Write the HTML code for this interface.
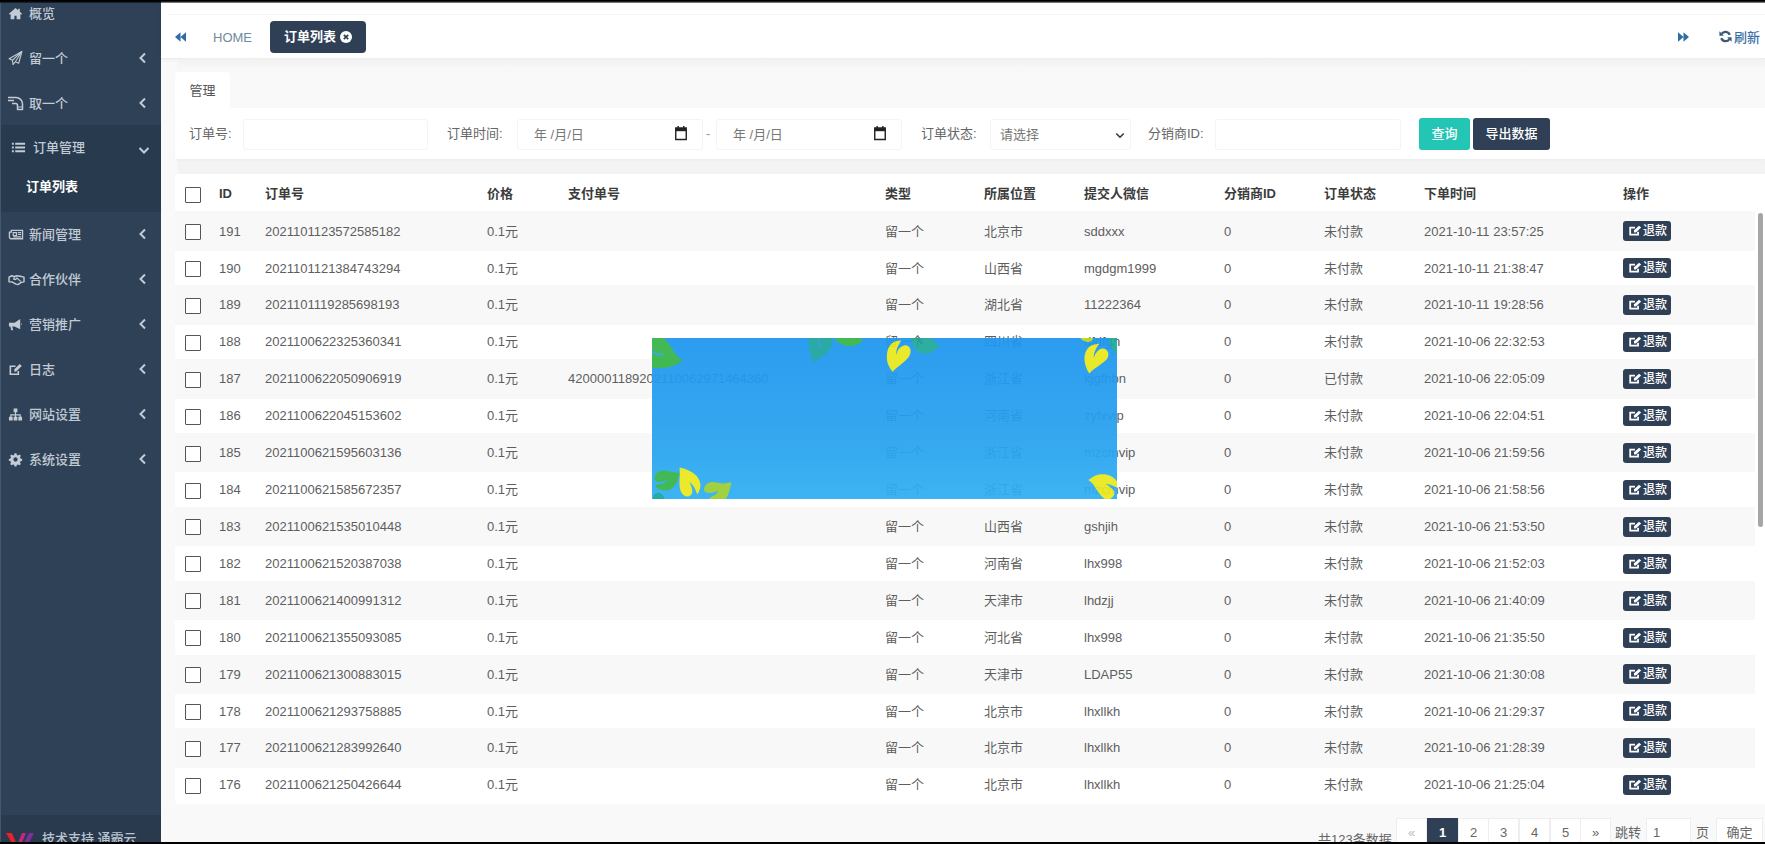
<!DOCTYPE html>
<html lang="zh-CN">
<head>
<meta charset="utf-8">
<title>订单列表</title>
<style>
*{box-sizing:border-box;margin:0;padding:0}
html,body{width:1765px;height:844px;overflow:hidden}
body{position:relative;background:#f9f9f9;font-family:"Liberation Sans","Noto Sans CJK SC",sans-serif;font-size:13px;color:#555;}
.topline{position:absolute;left:0;top:0;width:1765px;height:2.5px;background:linear-gradient(#000 0,#000 40%,rgba(0,0,0,.35) 100%);z-index:50}
.botline{position:absolute;left:0;top:841.5px;width:1765px;height:3px;background:#000;z-index:50}
/* sidebar */
.side{position:absolute;left:0;top:0;width:161px;height:844px;background:#2f4157;color:#c2cbd5;font-size:13px;font-weight:500}
.side .edge{position:absolute;left:0;top:0;width:1px;height:844px;background:#44566c;z-index:3}
.nav li{list-style:none;position:absolute;left:0;width:161px;height:45px;line-height:45px}
.nav li .ic{position:absolute;left:8px;top:15px;width:16px;height:15px;line-height:0}
.nav li .ic svg{display:block}
.nav li .tx{position:absolute;left:29px;top:0;white-space:nowrap}
.nav li .ar{position:absolute;left:138px;top:16px;width:9px;height:12px}
.nav .open{background:#283a4e}
.nav .sub{color:#fff;font-weight:bold}
.side .foot{position:absolute;left:0;top:815px;width:161px;height:29px;background:#293a4e}
.side .foot span{position:absolute;left:42px;top:15px;line-height:18px;font-size:13px;color:#b9c4d0;white-space:nowrap}
/* topbar */
.top{position:absolute;left:161px;top:2px;width:1604px;height:56.5px;background:#fff;border-bottom:1px solid #ececec;box-shadow:0 1px 4px rgba(0,0,0,.05)}
.top .hl{position:absolute;left:8px;top:12px;width:1596px;height:1px;background:#f4f4f4}
.tabact{position:absolute;left:109px;top:19px;width:96px;height:32px;border-radius:4px;background:#2f4056;color:#fff;font-weight:bold;line-height:32px}
.tabact span{position:absolute;left:14px;top:0;white-space:nowrap}
.home{position:absolute;left:52px;top:20px;line-height:32px;color:#7189a0;font-size:13px}
.refresh{position:absolute;left:1573px;top:20px;line-height:32px;color:#3b6fa5;white-space:nowrap;font-weight:500}
/* panels */
.gap{position:absolute;left:178px;width:1587px;background:#f3f3f3;box-shadow:0 0 3px #f3f3f3}
.tab{position:absolute;left:175px;top:72px;width:55px;height:37px;background:#fff;border-radius:4px 4px 0 0;line-height:38px;text-align:center;color:#555}
.search{position:absolute;left:175px;top:107.5px;width:1590px;height:51.5px;background:#fff;box-shadow:0 1px 3px rgba(0,0,0,.03)}
.search .lb{position:absolute;top:0;line-height:52px;white-space:nowrap;color:#666}
.search .inp{position:absolute;top:11px;height:31px;background:#fff;border:1px solid #f4f4f4;border-radius:3px;color:#777;line-height:29px}
.btn{position:absolute;top:10px;height:32px;border-radius:3px;color:#fff;line-height:32px;text-align:center;font-weight:500}
.tbl{position:absolute;left:175px;top:174px;width:1590px;height:629.5px;border-radius:4px 0 0 4px;background:#fff}
table{border-collapse:collapse;table-layout:fixed;position:absolute;left:0;top:0;width:1580px}
th,td{line-height:20px;text-align:left;font-weight:normal;padding:0;white-space:nowrap;overflow:visible;vertical-align:middle}
thead tr{height:38.635px}
th{padding-top:1px}
th{font-weight:bold;color:#3c3c3c}
tbody tr{height:36.93px}
.band{position:absolute;left:0;width:1580px;height:39.4px;background:#f8f8f8}
td{color:#5e5e5e;padding-top:1px}
.cb{display:block;width:16px;height:16px;border:1px solid #555;border-radius:1px;background:#fff;margin-left:9.5px;position:relative;top:.5px}
th .cb{top:1px}
.rf{display:inline-block;width:48px;height:20px;border-radius:3px;background:#2f4056;color:#fff;font-size:12px;font-weight:500;line-height:20px;position:relative;top:-.5px;vertical-align:middle}
.rf svg{position:absolute;left:5px;top:3px}
.rf span{position:absolute;left:20px;top:0}
.scroll{position:absolute;left:1757.5px;top:213px;width:5px;height:314px;background:#a6a6a6;border-radius:2.5px}
/* overlay */
.ov{position:absolute;left:652px;top:338px;width:465px;height:161px;overflow:hidden;opacity:.935;background:linear-gradient(#1e96ef,#26a0ef 55%,#30aff2);z-index:20}
/* pager */
.pgt{position:absolute;top:817.5px;line-height:30px;color:#666;white-space:nowrap}
.pg{position:absolute;top:817.5px;height:30px;width:31px;border:1px solid #eee;background:#fff;text-align:center;line-height:28px;color:#666}
</style>
</head>
<body>
<div class="side">
  <div class="edge"></div>
  <ul class="nav"><li style="top:-9px"><span class="ic"><svg viewBox="0 0 16 16" width="15" height="15"><path d="M8 2.2 1 8.2l.9 1 .9-.8V14h4v-3.6h2.4V14h4V8.4l.9.8.9-1L12.6 6V2.8h-1.8v1.7z" fill="#c3ccd6"/></svg></span><span class="tx">概览</span></li><li style="top:36px"><span class="ic"><svg viewBox="0 0 16 16" width="15" height="16" style="margin-top:-1px"><path d="M14.800 1 1.200 8.800l3.600 1.600.6 4.600 2.400-3 3.600 1.600z" fill="none" stroke="#c3ccd6" stroke-width="1.200" stroke-linejoin="round"/><path d="M14.800 1 4.800 10.400M14.800 1 7.800 12" fill="none" stroke="#c3ccd6" stroke-width="1.100"/></svg></span><span class="tx">留一个</span><svg class="ar" viewBox="0 0 9 12"><path d="M7 1.500 2.500 6 7 10.500" fill="none" stroke="#c3ccd6" stroke-width="2"/></svg></li><li style="top:81px"><span class="ic"><svg viewBox="0 0 18 16" width="18" height="16" style="margin-left:-1px;margin-top:-1px"><path d="M1 2.500h8c3.500 0 6.500 2.800 6.500 6.500v5.500H10.500V10.500c0-1-.8-2-2-2H5M1 5.500h6" fill="none" stroke="#c3ccd6" stroke-width="1.500" stroke-linejoin="round"/><path d="M10.500 12h5" stroke="#c3ccd6" stroke-width="1"/></svg></span><span class="tx">取一个</span><svg class="ar" viewBox="0 0 9 12"><path d="M7 1.500 2.500 6 7 10.500" fill="none" stroke="#c3ccd6" stroke-width="2"/></svg></li><li class="open" style="top:125px;height:87px"><span class="ic" style="left:11px"><svg viewBox="0 0 16 16" width="15" height="15"><path d="M1 3h2v2H1zM4.500 3H15v2H4.500zM1 7h2v2H1zM4.500 7H15v2H4.500zM1 11h2v2H1zM4.500 11H15v2H4.500z" fill="#c3ccd6"/></svg></span><span class="tx" style="left:33px">订单管理</span><svg class="ar" viewBox="0 0 12 9" style="width:12px;height:9px;top:21px"><path d="M1.500 2 6 6.500 10.500 2" fill="none" stroke="#c3ccd6" stroke-width="2"/></svg><span class="tx sub" style="left:26px;top:39px">订单列表</span></li><li style="top:212px"><span class="ic"><svg viewBox="0 0 16 16" width="16" height="15"><path d="M3 3.500h12v9H2.500A1.500 1.500 0 0 1 1 11V5.500h2z" fill="none" stroke="#c3ccd6" stroke-width="1.400"/><path d="M5 6h3.500v3H5zM10 6h3.500M10 8h3.500M5 10.500h8.500" fill="none" stroke="#c3ccd6" stroke-width="1.200"/></svg></span><span class="tx">新闻管理</span><svg class="ar" viewBox="0 0 9 12"><path d="M7 1.500 2.500 6 7 10.500" fill="none" stroke="#c3ccd6" stroke-width="2"/></svg></li><li style="top:257px"><span class="ic"><svg viewBox="0 0 18 16" width="17" height="15"><path d="M1 5.500 4 4l3 1 2-1 4 .5 4 1v5l-3 .5-3.500 2.500-2-.5L4 10.500H1z" fill="none" stroke="#c3ccd6" stroke-width="1.500" stroke-linejoin="round"/><path d="M7 5 6 7.500l2 .5 1.500-1.500 4 3.500" fill="none" stroke="#c3ccd6" stroke-width="1.300"/></svg></span><span class="tx">合作伙伴</span><svg class="ar" viewBox="0 0 9 12"><path d="M7 1.500 2.500 6 7 10.500" fill="none" stroke="#c3ccd6" stroke-width="2"/></svg></li><li style="top:302px"><span class="ic"><svg viewBox="0 0 16 16" width="15" height="15"><path d="M13 2v11L7 10H4.500l1 4H3.500l-1-4H1V6h6zM14 6.200c.8.300.8 2.300 0 2.600z" fill="#c3ccd6"/></svg></span><span class="tx">营销推广</span><svg class="ar" viewBox="0 0 9 12"><path d="M7 1.500 2.500 6 7 10.500" fill="none" stroke="#c3ccd6" stroke-width="2"/></svg></li><li style="top:347px"><span class="ic"><svg viewBox="0 0 16 16" width="15" height="15"><path d="M11 9.500V13H2.500V4.500H8" fill="none" stroke="#c3ccd6" stroke-width="1.700"/><path d="M7 10.500 6.500 8l6-6 2.200 2.200-6 6z" fill="#c3ccd6"/></svg></span><span class="tx">日志</span><svg class="ar" viewBox="0 0 9 12"><path d="M7 1.500 2.500 6 7 10.500" fill="none" stroke="#c3ccd6" stroke-width="2"/></svg></li><li style="top:392px"><span class="ic"><svg viewBox="0 0 16 16" width="15" height="15"><path d="M6 1.500h4v4H6zM1 10.500h4v4H1zM6 10.500h4v4H6zM11 10.500h4v4h-4zM7.400 5.500h1.200v2.300h5v2.700h-1.200V9H8.600v1.500H7.400V9H3.600v1.500H2.400V7.800h5z" fill="#c3ccd6"/></svg></span><span class="tx">网站设置</span><svg class="ar" viewBox="0 0 9 12"><path d="M7 1.500 2.500 6 7 10.500" fill="none" stroke="#c3ccd6" stroke-width="2"/></svg></li><li style="top:437px"><span class="ic"><svg viewBox="0 0 16 16" width="15" height="15"><path d="M8 1.200l1 .1.500 1.800 1.200.5 1.600-.9 1.400 1.400-.9 1.600.5 1.200 1.800.5v2l-1.800.5-.5 1.200.9 1.600-1.400 1.400-1.600-.9-1.200.5-.5 1.800H7l-.5-1.800-1.200-.5-1.600.9-1.400-1.400.9-1.600-.5-1.200L.9 9.400v-2l1.800-.5.5-1.200-.9-1.600 1.400-1.400 1.600.9 1.200-.5.500-1.800zM8 5.700a2.300 2.300 0 1 0 0 4.600 2.300 2.300 0 0 0 0-4.600z" fill="#c3ccd6" fill-rule="evenodd"/></svg></span><span class="tx">系统设置</span><svg class="ar" viewBox="0 0 9 12"><path d="M7 1.500 2.500 6 7 10.500" fill="none" stroke="#c3ccd6" stroke-width="2"/></svg></li></ul>
  <div class="foot"><svg viewBox="0 0 30 14" width="30" height="14" style="position:absolute;left:6px;top:18px"><path d="M0 0h6l5 12h-4z" fill="#e8212b"/><path d="M11 12 16 0h4l-5 12z" fill="#c0287a"/><path d="M17 12 23 0h5l-6 12z" fill="#7a2f9a"/></svg><span>技术支持 通霸云</span></div>
</div>
<div class="top">
  <div class="hl"></div><svg viewBox="0 0 14 12" width="11" height="10" style="position:absolute;left:14px;top:30px"><path d="M7 0v12L0 6zM14 0v12L7 6z" fill="#2e6da4"/></svg><svg viewBox="0 0 14 12" width="11" height="10" style="position:absolute;left:1517px;top:30px"><path d="M0 0v12l7-6zM7 0v12l7-6z" fill="#2e6da4"/></svg>
  <div class="home">HOME</div>
  <div class="tabact"><span>订单列表</span><svg viewBox="0 0 12 12" width="12" height="12" style="position:absolute;left:70px;top:10px"><circle cx="6" cy="6" r="6" fill="#fff"/><path d="M3.800 3.800l4.400 4.400M8.200 3.800 3.800 8.200" stroke="#2f4056" stroke-width="1.700"/></svg></div>
  <div class="refresh"><svg viewBox="0 0 16 16" width="13" height="13" style="position:absolute;left:-15.500px;top:8.300px"><path d="M13.200 6A5.600 5.600 0 0 0 3.200 4.800M2.800 10A5.600 5.600 0 0 0 12.800 11.200" fill="none" stroke="#3c5a78" stroke-width="2.800"/><path d="M.5 1.500v5.500h5.500zM15.500 14.500V9h-5.500z" fill="#3c5a78"/></svg>刷新</div>
</div>
<div class="gap" style="top:159px;height:15px"></div>
<div class="gap" style="top:58.5px;height:12px;background:linear-gradient(#f1f1f1,#f9f9f9)"></div>
<div class="tab">管理</div>
<div class="search">
<span class="lb" style="left:14px">订单号:</span>
<span class="inp" style="left:68px;width:185px"></span>
<span class="lb" style="left:272px">订单时间:</span>
<span class="inp" style="left:342px;width:186px"><span style="position:absolute;left:16px;top:0">年 /月/日</span><svg viewBox="0 0 16 16" width="14" height="16" preserveAspectRatio="none" style="position:absolute;right:14px;top:5.500px"><path d="M2 3h12v11.500H2z" fill="none" stroke="#222" stroke-width="1.600"/><path d="M2 3h12v3.200H2z" fill="#222"/><path d="M4.800 1v2.500M11.200 1v2.500" stroke="#222" stroke-width="1.600"/></svg></span>
<span class="lb" style="left:531px;color:#999">-</span>
<span class="inp" style="left:541px;width:186px"><span style="position:absolute;left:16px;top:0">年 /月/日</span><svg viewBox="0 0 16 16" width="14" height="16" preserveAspectRatio="none" style="position:absolute;right:14px;top:5.500px"><path d="M2 3h12v11.500H2z" fill="none" stroke="#222" stroke-width="1.600"/><path d="M2 3h12v3.200H2z" fill="#222"/><path d="M4.800 1v2.500M11.200 1v2.500" stroke="#222" stroke-width="1.600"/></svg></span>
<span class="lb" style="left:746px">订单状态:</span>
<span class="inp" style="left:815px;width:141px"><span style="position:absolute;left:9px;top:0">请选择</span><svg viewBox="0 0 12 8" width="10" height="7" style="position:absolute;right:5px;top:12px"><path d="M1.500 1.500 6 6l4.500-4.500" fill="none" stroke="#333" stroke-width="1.800"/></svg></span>
<span class="lb" style="left:973px">分销商ID:</span>
<span class="inp" style="left:1040px;width:186px"></span>
<span class="btn" style="left:1244px;width:51px;background:#23c6b4">查询</span>
<span class="btn" style="left:1298px;width:77px;background:#2f4056">导出数据</span>
</div>
<div class="tbl"><div class="band" style="top:37.40px"></div><div class="band" style="top:111.26px"></div><div class="band" style="top:185.12px"></div><div class="band" style="top:258.98px"></div><div class="band" style="top:332.84px"></div><div class="band" style="top:406.70px"></div><div class="band" style="top:480.56px"></div><div class="band" style="top:554.42px"></div><table><colgroup><col style="width:44px"><col style="width:46px"><col style="width:222px"><col style="width:81px"><col style="width:317px"><col style="width:99px"><col style="width:100px"><col style="width:140px"><col style="width:100px"><col style="width:100px"><col style="width:199px"><col style="width:132px"></colgroup><thead><tr><th><span class="cb"></span></th><th>ID</th><th>订单号</th><th>价格</th><th>支付单号</th><th>类型</th><th>所属位置</th><th>提交人微信</th><th>分销商ID</th><th>订单状态</th><th>下单时间</th><th>操作</th></tr></thead><tbody>
<tr><td><span class="cb"></span></td><td>191</td><td>2021101123572585182</td><td>0.1元</td><td></td><td>留一个</td><td>北京市</td><td>sddxxx</td><td>0</td><td>未付款</td><td>2021-10-11 23:57:25</td><td><span class="rf"><svg viewBox="0 0 16 16" width="14" height="13" preserveAspectRatio="none"><path d="M11.500 9.500V13H2.500V4.500H8" fill="none" stroke="#fff" stroke-width="2"/><path d="M7 10.500 6.600 8l6-6 2.400 2.400-6 6z" fill="#fff"/></svg><span>退款</span></span></td></tr>
<tr><td><span class="cb"></span></td><td>190</td><td>2021101121384743294</td><td>0.1元</td><td></td><td>留一个</td><td>山西省</td><td>mgdgm1999</td><td>0</td><td>未付款</td><td>2021-10-11 21:38:47</td><td><span class="rf"><svg viewBox="0 0 16 16" width="14" height="13" preserveAspectRatio="none"><path d="M11.500 9.500V13H2.500V4.500H8" fill="none" stroke="#fff" stroke-width="2"/><path d="M7 10.500 6.600 8l6-6 2.400 2.400-6 6z" fill="#fff"/></svg><span>退款</span></span></td></tr>
<tr><td><span class="cb"></span></td><td>189</td><td>2021101119285698193</td><td>0.1元</td><td></td><td>留一个</td><td>湖北省</td><td>11222364</td><td>0</td><td>未付款</td><td>2021-10-11 19:28:56</td><td><span class="rf"><svg viewBox="0 0 16 16" width="14" height="13" preserveAspectRatio="none"><path d="M11.500 9.500V13H2.500V4.500H8" fill="none" stroke="#fff" stroke-width="2"/><path d="M7 10.500 6.600 8l6-6 2.400 2.400-6 6z" fill="#fff"/></svg><span>退款</span></span></td></tr>
<tr><td><span class="cb"></span></td><td>188</td><td>2021100622325360341</td><td>0.1元</td><td></td><td>留一个</td><td>四川省</td><td>dfdfgn</td><td>0</td><td>未付款</td><td>2021-10-06 22:32:53</td><td><span class="rf"><svg viewBox="0 0 16 16" width="14" height="13" preserveAspectRatio="none"><path d="M11.500 9.500V13H2.500V4.500H8" fill="none" stroke="#fff" stroke-width="2"/><path d="M7 10.500 6.600 8l6-6 2.400 2.400-6 6z" fill="#fff"/></svg><span>退款</span></span></td></tr>
<tr><td><span class="cb"></span></td><td>187</td><td>2021100622050906919</td><td>0.1元</td><td>4200001189202110062971464360</td><td>留一个</td><td>浙江省</td><td>kjgfhbn</td><td>0</td><td>已付款</td><td>2021-10-06 22:05:09</td><td><span class="rf"><svg viewBox="0 0 16 16" width="14" height="13" preserveAspectRatio="none"><path d="M11.500 9.500V13H2.500V4.500H8" fill="none" stroke="#fff" stroke-width="2"/><path d="M7 10.500 6.600 8l6-6 2.400 2.400-6 6z" fill="#fff"/></svg><span>退款</span></span></td></tr>
<tr><td><span class="cb"></span></td><td>186</td><td>2021100622045153602</td><td>0.1元</td><td></td><td>留一个</td><td>河南省</td><td>zyfxvip</td><td>0</td><td>未付款</td><td>2021-10-06 22:04:51</td><td><span class="rf"><svg viewBox="0 0 16 16" width="14" height="13" preserveAspectRatio="none"><path d="M11.500 9.500V13H2.500V4.500H8" fill="none" stroke="#fff" stroke-width="2"/><path d="M7 10.500 6.600 8l6-6 2.400 2.400-6 6z" fill="#fff"/></svg><span>退款</span></span></td></tr>
<tr><td><span class="cb"></span></td><td>185</td><td>2021100621595603136</td><td>0.1元</td><td></td><td>留一个</td><td>浙江省</td><td>mzcmvip</td><td>0</td><td>未付款</td><td>2021-10-06 21:59:56</td><td><span class="rf"><svg viewBox="0 0 16 16" width="14" height="13" preserveAspectRatio="none"><path d="M11.500 9.500V13H2.500V4.500H8" fill="none" stroke="#fff" stroke-width="2"/><path d="M7 10.500 6.600 8l6-6 2.400 2.400-6 6z" fill="#fff"/></svg><span>退款</span></span></td></tr>
<tr><td><span class="cb"></span></td><td>184</td><td>2021100621585672357</td><td>0.1元</td><td></td><td>留一个</td><td>浙江省</td><td>mzcmvip</td><td>0</td><td>未付款</td><td>2021-10-06 21:58:56</td><td><span class="rf"><svg viewBox="0 0 16 16" width="14" height="13" preserveAspectRatio="none"><path d="M11.500 9.500V13H2.500V4.500H8" fill="none" stroke="#fff" stroke-width="2"/><path d="M7 10.500 6.600 8l6-6 2.400 2.400-6 6z" fill="#fff"/></svg><span>退款</span></span></td></tr>
<tr><td><span class="cb"></span></td><td>183</td><td>2021100621535010448</td><td>0.1元</td><td></td><td>留一个</td><td>山西省</td><td>gshjih</td><td>0</td><td>未付款</td><td>2021-10-06 21:53:50</td><td><span class="rf"><svg viewBox="0 0 16 16" width="14" height="13" preserveAspectRatio="none"><path d="M11.500 9.500V13H2.500V4.500H8" fill="none" stroke="#fff" stroke-width="2"/><path d="M7 10.500 6.600 8l6-6 2.400 2.400-6 6z" fill="#fff"/></svg><span>退款</span></span></td></tr>
<tr><td><span class="cb"></span></td><td>182</td><td>2021100621520387038</td><td>0.1元</td><td></td><td>留一个</td><td>河南省</td><td>lhx998</td><td>0</td><td>未付款</td><td>2021-10-06 21:52:03</td><td><span class="rf"><svg viewBox="0 0 16 16" width="14" height="13" preserveAspectRatio="none"><path d="M11.500 9.500V13H2.500V4.500H8" fill="none" stroke="#fff" stroke-width="2"/><path d="M7 10.500 6.600 8l6-6 2.400 2.400-6 6z" fill="#fff"/></svg><span>退款</span></span></td></tr>
<tr><td><span class="cb"></span></td><td>181</td><td>2021100621400991312</td><td>0.1元</td><td></td><td>留一个</td><td>天津市</td><td>lhdzjj</td><td>0</td><td>未付款</td><td>2021-10-06 21:40:09</td><td><span class="rf"><svg viewBox="0 0 16 16" width="14" height="13" preserveAspectRatio="none"><path d="M11.500 9.500V13H2.500V4.500H8" fill="none" stroke="#fff" stroke-width="2"/><path d="M7 10.500 6.600 8l6-6 2.400 2.400-6 6z" fill="#fff"/></svg><span>退款</span></span></td></tr>
<tr><td><span class="cb"></span></td><td>180</td><td>2021100621355093085</td><td>0.1元</td><td></td><td>留一个</td><td>河北省</td><td>lhx998</td><td>0</td><td>未付款</td><td>2021-10-06 21:35:50</td><td><span class="rf"><svg viewBox="0 0 16 16" width="14" height="13" preserveAspectRatio="none"><path d="M11.500 9.500V13H2.500V4.500H8" fill="none" stroke="#fff" stroke-width="2"/><path d="M7 10.500 6.600 8l6-6 2.400 2.400-6 6z" fill="#fff"/></svg><span>退款</span></span></td></tr>
<tr><td><span class="cb"></span></td><td>179</td><td>2021100621300883015</td><td>0.1元</td><td></td><td>留一个</td><td>天津市</td><td>LDAP55</td><td>0</td><td>未付款</td><td>2021-10-06 21:30:08</td><td><span class="rf"><svg viewBox="0 0 16 16" width="14" height="13" preserveAspectRatio="none"><path d="M11.500 9.500V13H2.500V4.500H8" fill="none" stroke="#fff" stroke-width="2"/><path d="M7 10.500 6.600 8l6-6 2.400 2.400-6 6z" fill="#fff"/></svg><span>退款</span></span></td></tr>
<tr><td><span class="cb"></span></td><td>178</td><td>2021100621293758885</td><td>0.1元</td><td></td><td>留一个</td><td>北京市</td><td>lhxllkh</td><td>0</td><td>未付款</td><td>2021-10-06 21:29:37</td><td><span class="rf"><svg viewBox="0 0 16 16" width="14" height="13" preserveAspectRatio="none"><path d="M11.500 9.500V13H2.500V4.500H8" fill="none" stroke="#fff" stroke-width="2"/><path d="M7 10.500 6.600 8l6-6 2.400 2.400-6 6z" fill="#fff"/></svg><span>退款</span></span></td></tr>
<tr><td><span class="cb"></span></td><td>177</td><td>2021100621283992640</td><td>0.1元</td><td></td><td>留一个</td><td>北京市</td><td>lhxllkh</td><td>0</td><td>未付款</td><td>2021-10-06 21:28:39</td><td><span class="rf"><svg viewBox="0 0 16 16" width="14" height="13" preserveAspectRatio="none"><path d="M11.500 9.500V13H2.500V4.500H8" fill="none" stroke="#fff" stroke-width="2"/><path d="M7 10.500 6.600 8l6-6 2.400 2.400-6 6z" fill="#fff"/></svg><span>退款</span></span></td></tr>
<tr><td><span class="cb"></span></td><td>176</td><td>2021100621250426644</td><td>0.1元</td><td></td><td>留一个</td><td>北京市</td><td>lhxllkh</td><td>0</td><td>未付款</td><td>2021-10-06 21:25:04</td><td><span class="rf"><svg viewBox="0 0 16 16" width="14" height="13" preserveAspectRatio="none"><path d="M11.500 9.500V13H2.500V4.500H8" fill="none" stroke="#fff" stroke-width="2"/><path d="M7 10.500 6.600 8l6-6 2.400 2.400-6 6z" fill="#fff"/></svg><span>退款</span></span></td></tr>
</tbody></table></div>
<div class="pgt" style="left:1318px;top:824.5px">共123条数据</div>
<div class="pg" style="left:1396px;color:#bbb">«</div>
<div class="pg" style="left:1427px;background:#2f4056;border-color:#2f4056;color:#fff;font-weight:bold">1</div>
<div class="pg" style="left:1458px">2</div>
<div class="pg" style="left:1488px">3</div>
<div class="pg" style="left:1519px">4</div>
<div class="pg" style="left:1550px">5</div>
<div class="pg" style="left:1580px">»</div>
<div class="pgt" style="left:1615px">跳转</div>
<div class="pg" style="left:1646px;width:45px;text-align:left;padding-left:6px">1</div>
<div class="pgt" style="left:1696px">页</div>
<div class="pg" style="left:1716px;width:47px">确定</div>

<div class="scroll"></div>
<div class="ov"><svg width="465" height="161" viewBox="0 0 465 161" style="position:absolute;left:0;top:0"><path d="M0 0H12.2C17 5 20 11 23.500 16 26 19.500 29 21.500 31.400 22.600 27 25.500 22 28 16.500 29.300 11 30.500 5 30.300 0 29.700z" fill="#35b548"/><path d="M-1 12.800C3 15.500 7 16.800 10 16.600" fill="none" stroke="#35a0ee" stroke-width="2" stroke-linecap="round"/><path d="M156.600 0C156.200 4 156.500 8 157.400 12 158.400 16.500 160 21 162 24.600 163.500 22.500 166 21 168.900 19.200 172.500 17 175.500 14.500 177.800 11.500 180 8.500 181.800 4.500 180.500 0z" fill="#1aa5a0"/><path d="M167.500 -1C166.600 3 166.800 6.500 167.800 10" fill="none" stroke="#2b9bd2" stroke-width="1.6" stroke-linecap="round"/><path d="M182.500 0C184.500 3 186.500 4.800 189.500 6.200 193 8 197 8.600 201 7.800 205 7 208.500 5 211 2.400 210 1.400 209 .6 207.800 0z" fill="#35b548"/><path d="M240.500 33.700C237.500 29.500 235.200 25.500 235 21.900 234.700 18.500 234.800 15.500 235.500 12.900 236.200 10 237.300 8 238.700 6.500 240.300 4.800 242 3.800 244.100 3.300 245.800 2.800 247.500 2.500 249.400 2.400 248 4.500 246.500 6.500 245.500 9.200 244.500 12 244 14.500 244.300 16.800 245 14 245.800 12.400 246.800 11 248.300 9 250 7.700 252.300 7.400 254 7.100 255.800 7.700 256.800 8.800 258.200 10.200 258.800 12 258.600 13.800 258.400 16 257.500 18 255.900 20.100 253.500 23 251 25 247.700 27.400 245 29.400 242.500 31.500 240.500 33.700z" fill="#e9e81d"/><path d="M259 0C259.400 3 260.200 5.500 261.300 7.400 262.500 9.800 264 11.800 265.900 13.300 268 15 271 15.800 274 15.600 276.500 15.400 279 14.500 281.300 12.900 283.500 11.500 285.800 10 287.600 8.800 285.800 6.800 284 4.800 282.200 2.900 281.300 1.900 280.400 .9 279.500 0z" fill="#1fa99b"/><path d="M265 -1C266.500 2 268 4 270.200 5.800" fill="none" stroke="#188f86" stroke-width="1.2" stroke-linecap="round"/><path d="M428.300 0C430.500 2.500 433 4 436.400 4.100 439 4.100 440.500 2.500 441.400 0z" fill="#b4d823"/><path d="M437.200 35.400C434.500 31 432.800 26.500 432.500 21.900 432.300 18.500 432.800 15.800 434 13.300 435 11 436.500 9.300 438.600 8 441 6.700 444 6.100 447.400 5.800 446 7.800 444.300 9.800 443.200 12.400 442 15 441.600 17.500 441.900 19.900 442.500 17.500 443.200 16 444.300 14.800 445.800 12.800 447.500 11 450 10.500 452 10.100 453.800 10.900 455 12.600 456 13.800 456.500 15.300 456.400 16.900 456.200 19 455.200 20.900 453.500 22.600 451 25 448 27 445 29 442 31 439.500 33 437.200 35.400z" fill="#e9e81d"/><path d="M457 0C456.900 2.500 457.200 4.500 457.800 6.200 458.800 8.800 460.200 10.800 462 12.600 463 13.800 464 15 465 16.200V0z" fill="#1fa99b"/><path d="M460.500 2C462 5 463.500 7 465 8.500" fill="none" stroke="#27b5a0" stroke-width="1.2" stroke-linecap="round"/><path d="M27.800 135.100C25 134.800 22.500 134.400 20 134 16.500 133.300 13.500 132.500 10.800 132.600 8.200 132.700 5.900 133.800 4.400 135.500 3.200 137 2.500 138.600 2.600 140.400 2.700 141.700 3.400 142.700 4.400 143.300 6.500 144.200 9 144 11.500 143.300 13.300 142.800 14.800 142.200 16.100 141.500 15.600 142.500 15 143.300 14.300 144 12 145.600 9.500 145.800 7.200 146.100 5.500 146.400 4.200 146.800 3.700 147.500 3.500 149 4.800 150 6.500 150.700 9 151.800 11.800 152.700 14.300 152.500 17 152.300 19.500 151 21.400 149 23.400 147 24.700 144.500 25.700 141.900 26.500 139.800 27.200 137.500 27.800 135.100z" fill="#35b548"/><path d="M27.500 129.400C30.500 130 33 130.800 35.600 131.900 39 133.400 42 135.200 44.200 137.600 46.200 139.800 47.500 142.200 48.100 144.700 48.700 147.200 48.500 149.500 47.700 151.800 47.100 153.500 46.300 155 45.200 156.400 45 155.700 44.800 155.200 44.500 154.600 43.800 152.600 43 150.700 42 149 40.800 147 39.200 145.300 37.100 144 38.200 145.400 38.800 146.800 39.200 148.200 39.900 150.200 40.500 152 40.300 153.900 40.100 155.800 38.900 157.400 37.100 158.200 35.300 159 33.500 158.600 32.100 157.500 30.300 156.200 29.200 154.400 28.500 152.500 27.600 149.800 27.400 147 27.500 144 27.600 141 27.700 138 27.800 135.500 27.800 133.500 27.700 131.500 27.500 129.400z" fill="#e9e81d"/><path d="M79.400 144.300C76.500 144.900 74 145.300 71.200 145.400 67.500 145.500 64.500 144.300 61.200 144 58.500 143.800 56 144.800 54.100 146.800 52.800 148.200 52 150 52 151.800 52.100 153.300 53.200 154.300 54.800 154.600 57 155 59.200 155 61.200 154.600 63 154.200 64.800 153.500 66.200 152.500 65.700 153.900 65 155.100 64.100 156.100 62.700 157.500 61 158.300 59.100 158.900 58 159.500 57.300 160.200 57 161H74C75.200 159 76.100 156.900 76.900 154.600 78 151.300 78.800 147.900 79.400 144.300z" fill="#9bcd33"/><path d="M.800 161C.8 158 2.500 155.500 5.500 154.800 8.500 154.200 11.500 156.500 12.200 161z" fill="#14a89a"/><path d="M436.400 141.900C438.800 140.200 441 138.700 443.600 137.600 446.500 136.400 449.300 136 452.100 136.200 454.800 136.500 457.200 137.200 459.200 138.300 461.500 139.700 463.300 141.400 465 143.300V149.700C463 148.500 461.200 147.600 459.200 146.900 457.200 146.300 455.300 146 453.500 146.100 455.200 146.900 456.600 147.900 457.800 149 459.800 150.200 461.300 151.600 462 153.300 462.700 155 462.500 156.700 461.300 158.200 460.400 159.400 459.200 160.300 457.800 161H452.800C450.800 159.600 449.200 158 447.800 156.100 445.500 153.300 443.800 150.500 442.100 147.600 440.600 145.200 438.800 143.400 436.400 141.900z" fill="#e9e81d"/></svg></div>
<div class="topline"></div>
<div class="botline"></div>
</body>
</html>
